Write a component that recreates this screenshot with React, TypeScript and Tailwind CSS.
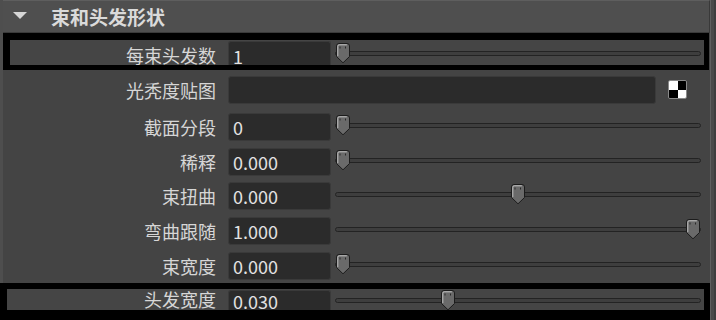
import type { ReactNode } from 'react';

type SliderRow = {
  label: string;
  value: string;
  pos: number; // 0..1 thumb position
};

const rows: SliderRow[] = [
  { label: '截面分段', value: '0', pos: 0 },
  { label: '稀释', value: '0.000', pos: 0 },
  { label: '束扭曲', value: '0.000', pos: 0.5 },
  { label: '弯曲跟随', value: '1.000', pos: 1 },
  { label: '束宽度', value: '0.000', pos: 0 },
];

const rowHeights = ['h-[35px]', 'h-[35px]', 'h-[34px]', 'h-[35px]', 'h-[35px]'];

const font = { fontFamily: '"Noto Sans CJK SC", "Noto Sans", sans-serif' };

function Thumb() {
  return (
    <svg width="16" height="22" viewBox="0 0 16 22">
      <path
        d="M1.5 4 Q1.5 1.5 4 1.5 H12 Q14.5 1.5 14.5 4 V14.5 L8 20.8 L1.5 14.5 Z"
        fill="#6a6a6a"
        stroke="#1c1c1c"
        strokeWidth="1"
      />
      <path d="M2.8 14 V4.2 Q2.8 2.8 4.2 2.8 H11.8" fill="none" stroke="#c2c2c2" strokeWidth="1" />
      <path d="M5 4.5 V6.5 M10.5 4.5 V6.5" stroke="#2a2a2a" strokeWidth="1" />
    </svg>
  );
}

function Slider({ pos, className = 'mb-[4px]' }: { pos: number; className?: string }) {
  return (
    <div className={`relative h-[22px] w-[366px] shrink-0 ${className}`}>
      <div className="absolute left-0 right-0 top-[9px] h-[5px] rounded-full bg-[#3e3e3e] border border-[#232323]" />
      <div className="absolute top-0" style={{ left: `${pos * 350}px` }}>
        <Thumb />
      </div>
    </div>
  );
}

function Field({
  value,
  className = 'w-[103px] h-[28px] rounded-[3px] border items-center',
}: {
  value: string;
  className?: string;
}) {
  return (
    <div
      className={`${className} shrink-0 bg-[#2b2b2b] border-[#3a3a3a] flex pl-[4px] text-[18px] leading-none text-[#e2e2e2]`}
    >
      {value}
    </div>
  );
}

function Label({ text, left }: { text: string; left: number }) {
  return (
    <div
      className="shrink-0 text-right text-[18px] leading-none text-[#d6d6d6]"
      style={{ width: `${216 - left}px` }}
    >
      {text}
    </div>
  );
}

function Row({ label, value, pos, left }: SliderRow & { left: number }) {
  return (
    <div className="flex items-center">
      <Label text={label} left={left} />
      <div className="ml-[12px]">
        <Field value={value} />
      </div>
      <div className="ml-[4px] flex items-center">
        <Slider pos={pos} />
      </div>
    </div>
  );
}

function BlackBox({ children, className }: { children: ReactNode; className: string }) {
  return <div className={`bg-black ${className}`}>{children}</div>;
}

export default function App() {
  return (
    <div className="w-[716px] h-[320px] overflow-hidden bg-[#444444] flex" style={font}>
      <div className="w-[710px] shrink-0 flex flex-col border-l-[3px] border-[#4e4e4e]">
        {/* Section header */}
        <div className="h-[33px] shrink-0 flex items-center bg-[#4f4f4f] border-t border-[#5e5e5e] border-b border-b-[#3a3a3a] border-r border-r-[#393939]">
          <svg width="14" height="7" viewBox="0 0 14 7" className="ml-[10px] mb-[3px]">
            <path d="M0 0 H14 L7 7 Z" fill="#d6d6d6" />
          </svg>
          <span className="ml-[24px] text-[19px] font-bold text-[#dadada] leading-none">束和头发形状</span>
        </div>

        {/* Highlighted row, cut by the black frame */}
        <BlackBox className="h-[37px] shrink-0 mr-[1px] pl-[7px] pr-[5px] pt-[7px] pb-[5px]">
          <div className="h-[25px] bg-[#454545] flex items-start pt-[1px]">
            <div className="pt-[5px]">
              <Label text="每束头发数" left={10} />
            </div>
            <div className="ml-[12px]">
              <Field
                value="1"
                className="w-[103px] h-[24px] rounded-t-[3px] border border-b-0 items-start pt-[5px]"
              />
            </div>
            <div className="ml-[4px] pt-[1px]">
              <Slider pos={0} className="" />
            </div>
          </div>
        </BlackBox>

        {/* Texture map row */}
        <div className="h-[39px] shrink-0 flex items-center">
          <Label text="光秃度贴图" left={3} />
          <div className="ml-[12px]">
            <Field value="" className="w-[428px] h-[28px] rounded-[3px] border items-center" />
          </div>
          <div className="ml-[12px] w-[19px] h-[19px] rounded-[2px] border border-[#8a8a8a] grid grid-cols-2 overflow-hidden">
            <div className="bg-white" />
            <div className="bg-black" />
            <div className="bg-black" />
            <div className="bg-white" />
          </div>
        </div>

        {rows.map((r, i) => (
          <div key={r.label} className={`${rowHeights[i]} shrink-0 flex items-center`}>
            <Row {...r} left={3} />
          </div>
        ))}

        {/* Highlighted row (bottom), cut by the black frame */}
        <BlackBox className="w-[711px] -ml-[3px] shrink-0 pl-[7px] pr-[7px] pt-[6px] pb-[12px]">
          <div className="h-[21px] bg-[#454545] flex items-end">
            <div className="pb-[2px]">
              <Label text="头发宽度" left={7} />
            </div>
            <div className="ml-[12px]">
              <Field
                value="0.030"
                className="w-[103px] h-[20px] rounded-t-[3px] border border-b-0 items-center"
              />
            </div>
            <div className="ml-[4px] h-[21px] overflow-hidden">
              <Slider pos={0.3} className="" />
            </div>
          </div>
        </BlackBox>
      </div>

      {/* Scrollbar strip */}
      <div className="flex-1 bg-[#494949] border-l border-[#5f5f5f] flex justify-end">
        <div className="w-[2px] bg-[#3d3d3d]" />
      </div>
    </div>
  );
}
